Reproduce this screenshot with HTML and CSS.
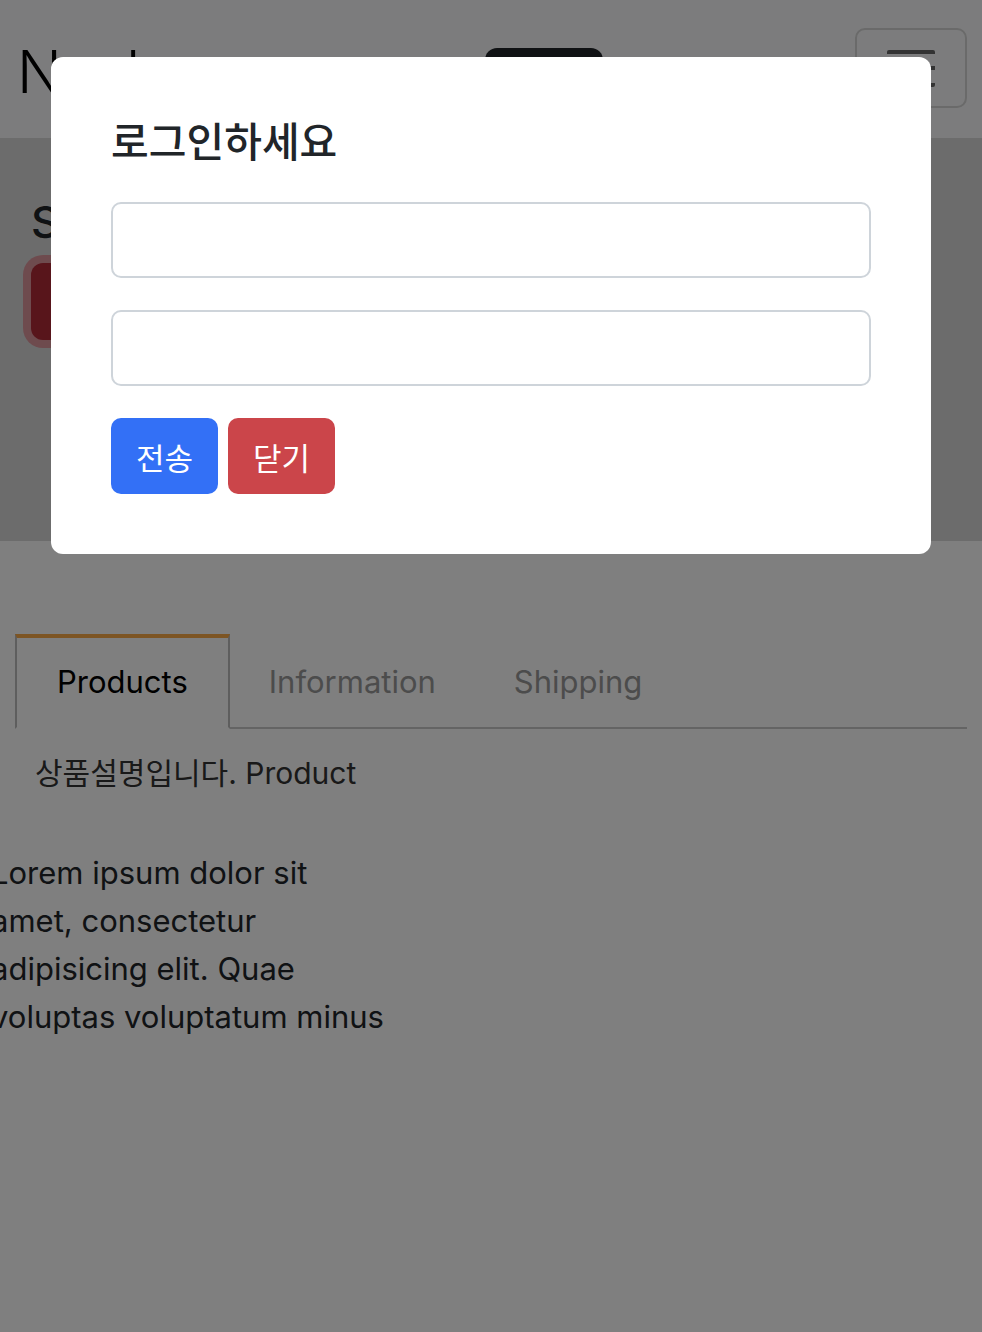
FILE: index.html
```html
<!DOCTYPE html>
<html lang="ko">
	<head>
		<meta charset="utf-8">
		<meta name="viewport" content="width=device-width,initial-scale=1.0">
		<title>Shop</title>
		<link rel="stylesheet" href="styles.css">
	</head>
	<body>
		<nav class="navbar">
			<a class="brand" href="#">Navbar</a>
			<button class="btn-cart">Cart</button>
			<button class="toggler"><span class="toggler-icon"></span></button>
		</nav>

		<div class="promo">
			<h2 class="promo-title">Sale 20% off</h2>
			<button class="btn-promo">Buy now</button>
		</div>

		<div class="tabs">
			<ul class="tab-list">
				<li class="tab active">Products</li>
				<li class="tab">Information</li>
				<li class="tab">Shipping</li>
			</ul>
			<div class="tab-content">상품설명입니다. Product</div>
		</div>

		<p class="lorem">Lorem ipsum dolor sit amet, consectetur adipisicing elit. Quae voluptas voluptatum minus</p>

		<!-- 로그인 모달 -->
		<div class="backdrop">
			<div class="modal">
				<h3 class="modal-title">로그인하세요</h3>
				<form>
					<input class="form-control" type="text">
					<input class="form-control" type="password">
					<div class="actions">
						<button type="submit" class="btn btn-primary">전송</button>
						<button type="button" class="btn btn-danger">닫기</button>
					</div>
				</form>
			</div>
		</div>
	</body>
</html>
```
FILE: styles.css
```css
*{
	margin: 0;
	padding: 0;
	box-sizing: border-box;
}
body{
	font-family: Inter, "Noto Sans CJK KR", sans-serif;
	color: #212529;
	background: #fff;
	overflow: hidden;
}
ul{
	list-style: none;
}

/* navbar */
.navbar{
	height: 138px;
	background: #f8f9fa;
	padding: 28px 15px 0 17px;
	display: flex;
	justify-content: space-between;
	align-items: flex-start;
}
.navbar .brand{
	width: 215px;
	font-size: 59px;
	line-height: 59px;
	font-weight: 300;
	color: #000;
	text-decoration: none;
	margin-top: 14px;
}
.navbar .btn-cart{
	width: 118px;
	height: 76px;
	margin-top: 20px;
	border: none;
	border-radius: 12px;
	background: #212529;
	color: #fff;
	font-size: 30px;
}
.navbar .toggler{
	width: 112px;
	height: 80px;
	border: 2px solid #d4d4d4;
	border-radius: 10px;
	background: none;
	display: flex;
	align-items: center;
	justify-content: center;
}
.toggler-icon{
	width: 48px;
	height: 37px;
	background:
		linear-gradient(#666, #666) 0 0 / 100% 4px no-repeat,
		linear-gradient(#666, #666) 0 16px / 100% 4px no-repeat,
		linear-gradient(#666, #666) 0 33px / 100% 4px no-repeat;
	border-radius: 2px;
}

/* promo band */
.promo{
	height: 403px;
	background: #d9d9d9;
	padding: 58px 31px 0;
}
.promo-title{
	font-size: 44px;
	font-weight: 500;
	line-height: 1.2;
	margin-bottom: 14px;
}
.btn-promo{
	height: 77px;
	padding: 0 28px;
	border: none;
	border-radius: 12px;
	background: #b02a37;
	color: #fff;
	font-size: 32px;
	box-shadow: 0 0 0 8px rgba(225, 83, 97, .5);
}

/* tabs */
.tabs{
	margin-top: 93px;
	padding: 0 15px;
}
.tab-list{
	display: flex;
	border-bottom: 2px solid #c8c8c8;
}
.tab{
	padding: 24px 39px 25px;
	font-size: 31px;
	line-height: 40px;
	color: #999;
	border-top: 4px solid transparent;
}
.tab.active{
	padding: 24px 40px 25px;
	color: #000;
	border-top-color: #fbab48;
	border-left: 2px solid #bdbdbd;
	border-right: 2px solid #bdbdbd;
	margin-bottom: -2px;
	border-bottom: 2px solid #fff;
}
.tab-content{
	padding: 24px 20px 26px;
	font-size: 30px;
	line-height: 40px;
	color: #333;
}

.lorem{
	margin: 30px 0 0 -9px;
	width: 393px;
	font-size: 31px;
	line-height: 48px;
}

/* modal */
.backdrop{
	position: fixed;
	inset: 0;
	background: rgba(0, 0, 0, .5);
	display: flex;
	justify-content: center;
	align-items: flex-start;
	padding-top: 57px;
}
.modal{
	width: 880px;
	background: #fff;
	border-radius: 12px;
	padding: 60px;
}
.modal-title{
	font-size: 41px;
	font-weight: 500;
	line-height: 50px;
	margin-bottom: 35px;
}
.form-control{
	display: block;
	width: 100%;
	height: 76px;
	margin-bottom: 32px;
	border: 2px solid #ced4da;
	border-radius: 10px;
	padding: 0 24px;
	font-size: 32px;
}
.actions{
	display: flex;
	gap: 10px;
}
.btn{
	width: 107px;
	height: 76px;
	border: none;
	border-radius: 10px;
	color: #fff;
	font-family: Inter, "Noto Sans CJK KR", sans-serif;
	font-size: 31px;
}
.btn-primary{
	background: #3370f6;
}
.btn-danger{
	background: #cb454a;
}
```
